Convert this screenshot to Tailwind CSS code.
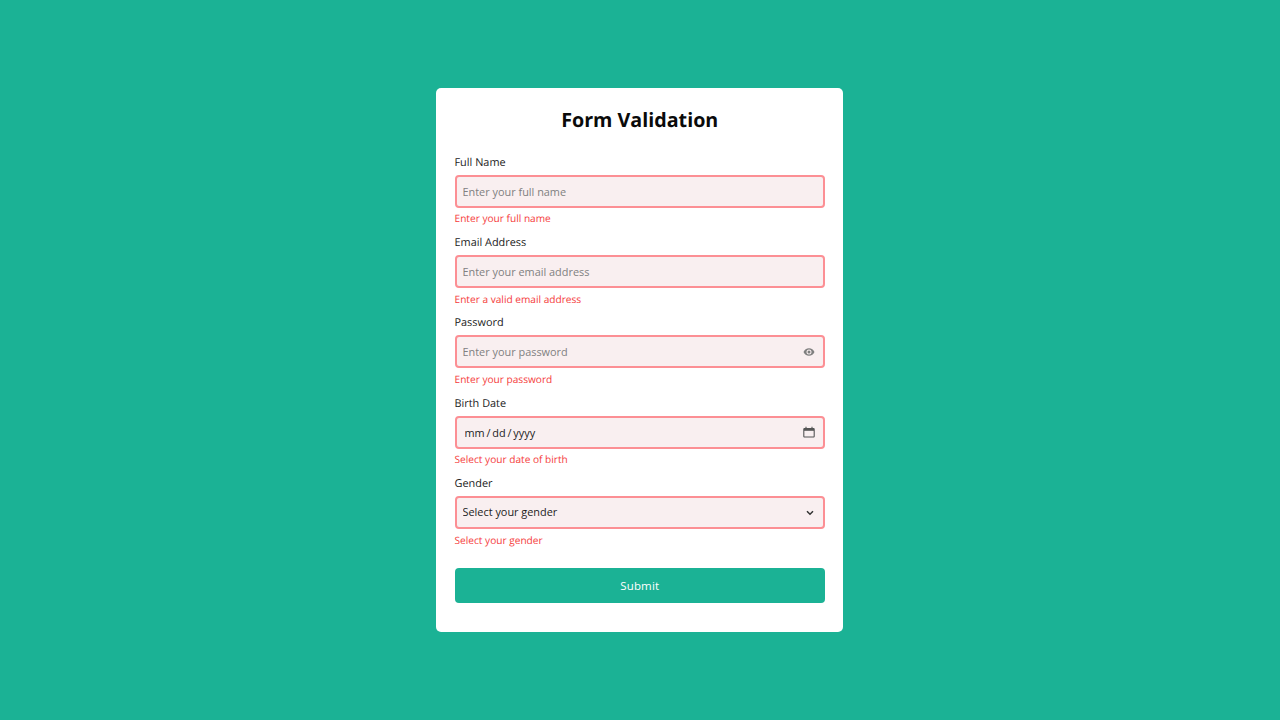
<!DOCTYPE html>
<html lang="en">
<head>
  <meta charset="UTF-8">
  <meta name="viewport" content="width=device-width, initial-scale=1.0">
  <title>Form Validation</title>
  <script src="https://cdn.jsdelivr.net/npm/@tailwindcss/browser@4"></script>
</head>
<body class="bg-[#1bb295] min-h-screen flex items-center justify-center font-['Open_Sans',sans-serif] [text-rendering:geometricPrecision]">
  <div class="w-[407px] h-[544px] mr-[1px] bg-white rounded-[5px] pl-[18.5px] pr-[18px] pt-[18px]">
    <h1 class="text-[19.7px] leading-[28px] font-bold text-center text-[#0a0a0a]">Form Validation</h1>

    <form class="mt-[20.7px]">
      <div class="h-[80.4px]">
        <label class="block text-[10.9px] leading-[16px] text-[#1c1c1c]">Full Name</label>
        <input type="text" placeholder="Enter your full name" class="block w-full mt-[3.9px] h-[33px] px-[6px] bg-[#f9eff0] border-2 border-[#fc8f94] rounded-[4px] text-[10.9px] placeholder:text-[#808080]">
        <p class="mt-[3.6px] text-[10.15px] leading-[15px] text-[#f53b3b]">Enter your full name</p>
      </div>

      <div class="h-[80.4px]">
        <label class="block text-[10.9px] leading-[16px] text-[#1c1c1c]">Email Address</label>
        <input type="email" placeholder="Enter your email address" class="block w-full mt-[3.9px] h-[33px] px-[6px] bg-[#f9eff0] border-2 border-[#fc8f94] rounded-[4px] text-[10.9px] placeholder:text-[#808080]">
        <p class="mt-[3.6px] text-[10.15px] leading-[15px] text-[#f53b3b]">Enter a valid email address</p>
      </div>

      <div class="h-[80.4px]">
        <label class="block text-[10.9px] leading-[16px] text-[#1c1c1c]">Password</label>
        <div class="relative mt-[3.9px]">
          <input type="password" placeholder="Enter your password" class="block w-full h-[33px] px-[6px] bg-[#f9eff0] border-2 border-[#fc8f94] rounded-[4px] text-[10.9px] placeholder:text-[#808080]">
          <svg class="absolute right-[10px] top-[11px] w-[12px] h-[12px]" viewBox="0 0 24 24" fill="#808080"><path fill-rule="evenodd" d="M12 4.5C7 4.5 2.7 7.6 1 12c1.7 4.4 6 7.5 11 7.5s9.3-3.1 11-7.5c-1.7-4.4-6-7.500-11-7.500zM12 17a5 5 0 1 1 0-10 5 5 0 0 1 0 10zm0-8a3 3 0 1 0 0 6 3 3 0 0 0 0-6z"/></svg>
        </div>
        <p class="mt-[3.6px] text-[10.15px] leading-[15px] text-[#f53b3b]">Enter your password</p>
      </div>

      <div class="h-[80.4px]">
        <label class="block text-[10.9px] leading-[16px] text-[#1c1c1c]">Birth Date</label>
        <div class="relative mt-[3.9px]">
          <input type="text" value="mm / dd / yyyy" class="block w-full h-[33px] pl-[8px] pr-[7px] bg-[#f9eff0] border-2 border-[#fc8f94] rounded-[4px] text-[10.9px] [word-spacing:-1px] text-[#1c1c1c]">
          <svg class="absolute right-[10px] top-[10px] w-[12px] h-[12px]" viewBox="0 0 12 12" fill="none"><path d="M1.5 2.5h9a.7.7 0 0 1 .7.7v7.100a.7.7 0 0 1-.7.7h-9a.7.7 0 0 1-.7-.7V3.200a.7.7 0 0 1 .7-.7z" stroke="#555" stroke-width="1.100"/><path d="M1 2.500h10v2.300H1z" fill="#555"/><path d="M3 .8v2M9 .8v2" stroke="#555" stroke-width="1.100"/></svg>
        </div>
        <p class="mt-[3.6px] text-[10.15px] leading-[15px] text-[#f53b3b]">Select your date of birth</p>
      </div>

      <div class="h-[80.4px]">
        <label class="block text-[10.9px] leading-[16px] text-[#1c1c1c]">Gender</label>
        <div class="relative mt-[3.9px]">
          <select class="block w-full h-[33px] px-[6px] appearance-none bg-[#f9eff0] border-2 border-[#fc8f94] rounded-[4px] text-[10.9px] text-[#1c1c1c]">
            <option>Select your gender</option>
          </select>
          <svg class="absolute right-[10px] top-[12px] w-[10px] h-[10px]" viewBox="0 0 10 10" fill="none" stroke="#333" stroke-width="1.500"><path d="M2 3.200l3 3 3-3"/></svg>
        </div>
        <p class="mt-[3.6px] text-[10.15px] leading-[15px] text-[#f53b3b]">Select your gender</p>
      </div>

      <button type="button" class="block w-full h-[35px] mt-[11.3px] bg-[#1bb295] text-white text-[11.5px] font-medium tracking-[0.2px] rounded-[4px]">Submit</button>
    </form>
  </div>
</body>
</html>
